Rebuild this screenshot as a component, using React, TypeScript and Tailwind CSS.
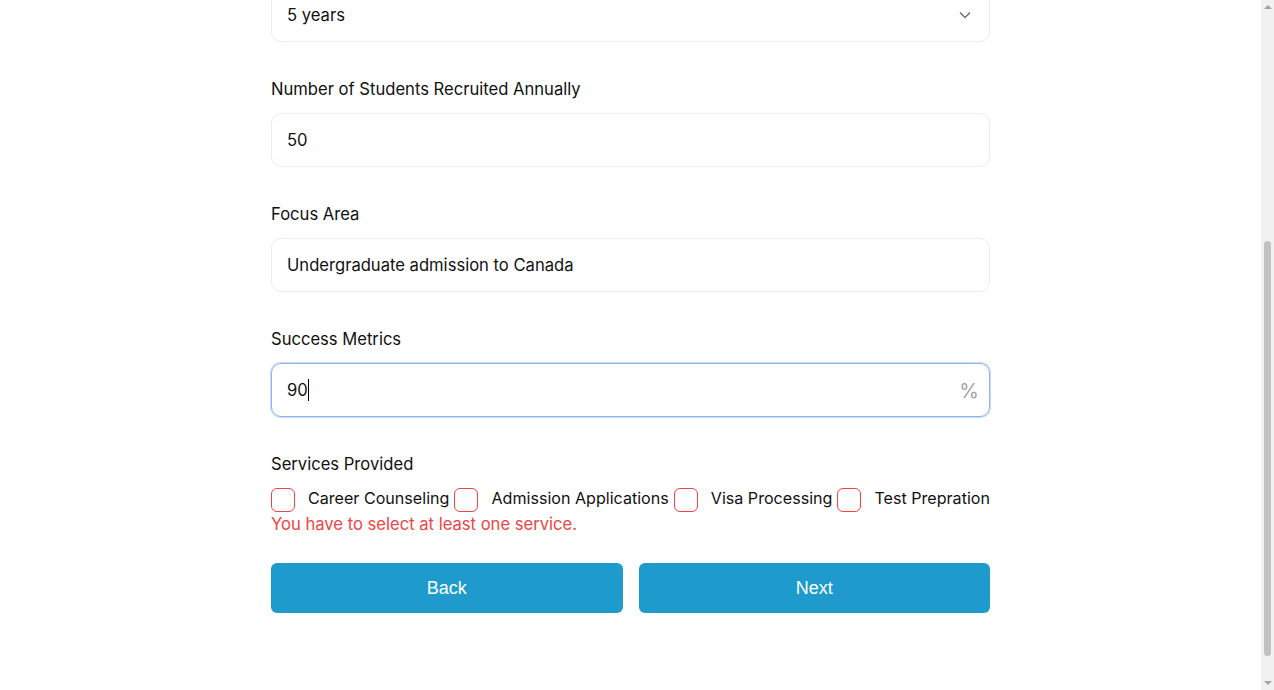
import { useState } from 'react'

const services = ['Career Counseling', 'Admission Applications', 'Visa Processing', 'Test Prepration']

function Field({ label, children }: { label: string; children: React.ReactNode }) {
  return (
    <div className="mt-[35px]">
      <label className="block text-[16.6px] leading-6 text-[#111]">{label}</label>
      <div className="mt-3">{children}</div>
    </div>
  )
}

export default function App() {
  const [checked, setChecked] = useState<boolean[]>([false, false, false, false])

  return (
    <div className="flex h-[690px] overflow-hidden bg-white font-['Inter',sans-serif] text-[#111]">
      <main className="flex flex-1 justify-center">
        <div className="-mt-3 w-[719px]">
          <div className="flex h-[54px] items-center justify-between rounded-[10px] border border-[#ececec] px-[15px] pt-px text-[16.6px]">
            <span>5 years</span>
            <svg className="mr-[3px] mb-px h-3 w-3 text-[#6b6b6b]" viewBox="0 0 12 12" fill="none" stroke="currentColor" strokeWidth="1.4">
              <path d="M1 3.5 6 8.5l5-5" />
            </svg>
          </div>

          <Field label="Number of Students Recruited Annually">
            <div className="flex h-[54px] items-center rounded-[10px] border border-[#ececec] px-[15px] pt-px text-[16.6px]">50</div>
          </Field>

          <Field label="Focus Area">
            <div className="flex h-[54px] items-center rounded-[10px] border border-[#ececec] px-[15px] pt-px text-[16.6px]">
              Undergraduate admission to Canada
            </div>
          </Field>

          <Field label="Success Metrics">
            <div className="flex h-[54px] items-center justify-between rounded-[10px] border border-[#8fb2f0] px-[15px] pt-px text-[16.6px] ring-1 ring-[#c9dbfb]">
              <span className="flex items-center">
                90<span className="inline-block h-[22px] w-px bg-black" />
              </span>
              <span className="-mr-[5px] text-[20px] text-[#a3a3a3]">%</span>
            </div>
          </Field>

          <div className="mt-[35px]">
            <p className="text-[16.6px] leading-6">Services Provided</p>
            <div className="mt-3 flex items-center justify-between text-[16.1px]">
              {services.map((s, i) => (
                <label key={s} className="flex cursor-pointer items-center whitespace-nowrap">
                  <button
                    type="button"
                    onClick={() => setChecked(checked.map((c, j) => (j === i ? !c : c)))}
                    className="h-6 w-6 shrink-0 rounded-md border border-[#ef4444] bg-white"
                  />
                  <span className="ml-[13px] -mt-[3px]">{s}</span>
                </label>
              ))}
            </div>
            <p className="text-[16.6px] leading-6 text-[#ef4444]">You have to select at least one service.</p>
          </div>

          <div className="mt-[27px] grid grid-cols-2 gap-4">
            <button className="h-[50px] rounded-md bg-[#1e9bcc] font-['Liberation_Sans',sans-serif] text-[18px] text-white">Back</button>
            <button className="h-[50px] rounded-md bg-[#1e9bcc] font-['Liberation_Sans',sans-serif] text-[18px] text-white">Next</button>
          </div>
        </div>
      </main>

      <div className="flex w-[13px] flex-col items-center bg-[#f1f1f1]">
        <div className="mt-[5px] h-0 w-0 border-x-[4px] border-b-[4px] border-x-transparent border-b-[#a3a3a3]" />
        <div className="mt-[232px] h-[415px] w-[7px] rounded-full bg-[#c1c1c1]" />
        <div className="mt-auto mb-[5px] h-0 w-0 border-x-[4px] border-t-[4px] border-x-transparent border-t-[#a3a3a3]" />
      </div>
    </div>
  )
}
